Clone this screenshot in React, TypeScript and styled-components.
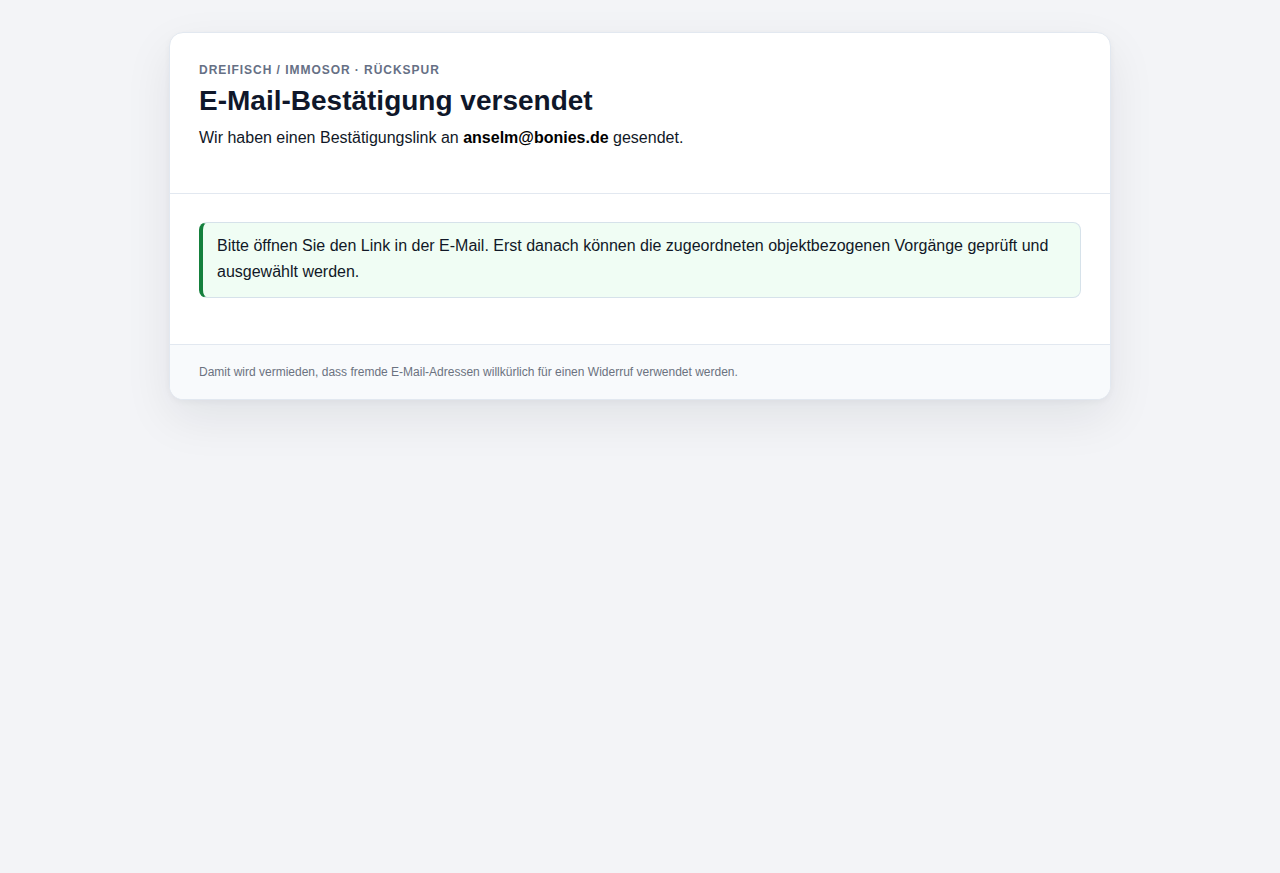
import styled, { createGlobalStyle } from 'styled-components';

const GlobalStyle = createGlobalStyle`
  html, body {
    margin: 0;
    padding: 0;
    background: #f3f4f7;
    font-family: 'Liberation Sans', Arial, sans-serif;
    color: #0f172a;
  }
`;

const App = () => {
  return (
    <>
      <GlobalStyle />
      <Page>
        <Card>
          <Header>
            <Eyebrow>Dreifisch / Immosor · Rückspur</Eyebrow>
            <Title>E-Mail-Bestätigung versendet</Title>
            <Lead>
              Wir haben einen Bestätigungslink an{' '}
              <strong>anselm@bonies.de</strong> gesendet.
            </Lead>
          </Header>
          <Body>
            <Notice>
              Bitte öffnen Sie den Link in der E-Mail. Erst danach können die
              zugeordneten objektbezogenen Vorgänge geprüft und ausgewählt
              werden.
            </Notice>
          </Body>
          <Footer>
            Damit wird vermieden, dass fremde E-Mail-Adressen willkürlich für
            einen Widerruf verwendet werden.
          </Footer>
        </Card>
      </Page>
    </>
  );
};

const Page = styled.div`
  min-height: 873px;
  padding: 32px 0;
  box-sizing: border-box;
`;

const Card = styled.div`
  width: 942px;
  margin: 0 auto;
  box-sizing: border-box;
  background: #ffffff;
  border: 1px solid #e2e8f0;
  border-radius: 14px;
  overflow: hidden;
  box-shadow: 0 18px 48px rgba(15, 23, 42, 0.08), 0 2px 6px rgba(15, 23, 42, 0.04);
`;

const Header = styled.div`
  padding: 29px 29px 43px;
  border-bottom: 1px solid #e2e8f0;
`;

const Eyebrow = styled.div`
  font-size: 12px;
  line-height: 17px;
  font-weight: 700;
  letter-spacing: 0.08em;
  text-transform: uppercase;
  color: #667085;
`;

const Title = styled.h1`
  margin: 5px 0 0;
  font-size: 28px;
  line-height: 34px;
  font-weight: 700;
  color: #0f172a;
`;

const Lead = styled.p`
  margin: 8px 0 0;
  font-size: 16px;
  line-height: 24px;
  color: #111827;

  strong {
    color: #000;
  }
`;

const Body = styled.div`
  padding: 28px 29px 46px;
`;

const Notice = styled.div`
  padding: 10px 16px 12px 14px;
  background: #f0fdf4;
  border: 1px solid #d6e2ea;
  border-left: 4px solid #15803d;
  border-radius: 8px;
  font-size: 16px;
  line-height: 26px;
  color: #111827;
`;

const Footer = styled.div`
  padding: 19px 29px 19px;
  background: #f8fafc;
  border-top: 1px solid #e2e8f0;
  font-size: 12px;
  line-height: 16px;
  color: #6b7280;
`;

export default App;
